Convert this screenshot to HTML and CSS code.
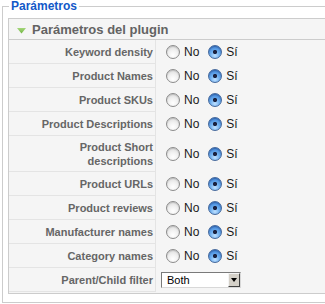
FILE: index.html
```html
<!DOCTYPE html>
<html lang="es">
<head>
<meta charset="utf-8">
<title>Parámetros</title>
<link rel="stylesheet" href="styles.css">
</head>
<body>
<fieldset class="params">
  <legend class="params-legend">Parámetros</legend>
  <div class="panel">
    <h3 class="panel-title">
      <svg class="arrow" width="9" height="6" viewBox="0 0 9 6" aria-hidden="true">
        <defs>
          <linearGradient id="ag" x1="0" y1="0" x2="0" y2="1">
            <stop offset="0" stop-color="#a6d77c"/>
            <stop offset="1" stop-color="#6fb43f"/>
          </linearGradient>
        </defs>
        <polygon points="0,0 9,0 4.5,5.5" fill="url(#ag)"/>
      </svg>
      <span>Parámetros del plugin</span>
    </h3>
    <div class="panel-content">
      <table class="paramlist">
        <tr>
          <td class="key">Keyword density</td>
          <td class="value"><div class="choices"><label class="opt"><input type="radio" class="radio" name="p1">No</label><label class="opt"><input type="radio" class="radio" name="p1" checked>Sí</label></div></td>
        </tr>
        <tr>
          <td class="key">Product Names</td>
          <td class="value"><div class="choices"><label class="opt"><input type="radio" class="radio" name="p2">No</label><label class="opt"><input type="radio" class="radio" name="p2" checked>Sí</label></div></td>
        </tr>
        <tr>
          <td class="key">Product SKUs</td>
          <td class="value"><div class="choices"><label class="opt"><input type="radio" class="radio" name="p3">No</label><label class="opt"><input type="radio" class="radio" name="p3" checked>Sí</label></div></td>
        </tr>
        <tr>
          <td class="key">Product Descriptions</td>
          <td class="value"><div class="choices"><label class="opt"><input type="radio" class="radio" name="p4">No</label><label class="opt"><input type="radio" class="radio" name="p4" checked>Sí</label></div></td>
        </tr>
        <tr>
          <td class="key">Product Short<br>descriptions</td>
          <td class="value"><div class="choices"><label class="opt"><input type="radio" class="radio" name="p5">No</label><label class="opt"><input type="radio" class="radio" name="p5" checked>Sí</label></div></td>
        </tr>
        <tr>
          <td class="key">Product URLs</td>
          <td class="value"><div class="choices"><label class="opt"><input type="radio" class="radio" name="p6">No</label><label class="opt"><input type="radio" class="radio" name="p6" checked>Sí</label></div></td>
        </tr>
        <tr>
          <td class="key">Product reviews</td>
          <td class="value"><div class="choices"><label class="opt"><input type="radio" class="radio" name="p7">No</label><label class="opt"><input type="radio" class="radio" name="p7" checked>Sí</label></div></td>
        </tr>
        <tr>
          <td class="key">Manufacturer names</td>
          <td class="value"><div class="choices"><label class="opt"><input type="radio" class="radio" name="p8">No</label><label class="opt"><input type="radio" class="radio" name="p8" checked>Sí</label></div></td>
        </tr>
        <tr>
          <td class="key">Category names</td>
          <td class="value"><div class="choices"><label class="opt"><input type="radio" class="radio" name="p9">No</label><label class="opt"><input type="radio" class="radio" name="p9" checked>Sí</label></div></td>
        </tr>
        <tr>
          <td class="key">Parent/Child filter</td>
          <td class="value value-select">
            <div class="select">
              <span class="select-text">Both</span>
              <span class="select-btn"><span class="select-tri"></span></span>
            </div>
          </td>
        </tr>
      </table>
    </div>
  </div>
</fieldset>
</body>
</html>
```
FILE: styles.css
```css
html, body {
  margin: 0;
  padding: 0;
  overflow: hidden;
  background: #fff;
}

body {
  font-family: "Liberation Sans", Arial, Helvetica, sans-serif;
  font-size: 11px;
  color: #333;
}

.params {
  margin: 0 0 0 2px;
  padding: 6px 0 8px 5px;
  border: 1px solid #cccccc;
  width: 360px;
  min-width: 0;
}

.params-legend {
  color: #1258c8;
  font-size: 12px;
  font-weight: bold;
  line-height: 12px;
  padding: 0 2px;
  margin-left: 1px;
}

.panel {
  border: 1px solid #cccccc;
  background: #f5f5f5;
}

.panel-title {
  margin: 0;
  height: 20px;
  display: flex;
  align-items: center;
  padding-left: 8px;
  gap: 6px;
  font-size: 13px;
  font-weight: bold;
  color: #636363;
  border-bottom: 1px solid #cccccc;
  background: #f5f5f5;
}

.arrow {
  display: block;
  margin-top: 3px;
}

.panel-content {
  padding-bottom: 1px;
}

.paramlist {
  border-collapse: separate;
  border-spacing: 0;
  table-layout: fixed;
  width: 100%;
}

.paramlist td {
  box-sizing: border-box;
  height: 24px;
  vertical-align: middle;
}

.key {
  width: 147px;
  text-align: right;
  font-weight: bold;
  font-size: 11px;
  line-height: 14px;
  color: #666;
  padding: 4px 2px 3px 4px;
  border-bottom: 1px solid #e4e4e4;
  border-right: 1px solid #e4e4e4;
}

.value {
  padding: 0 0 0 10px;
}

.choices {
  display: flex;
  align-items: center;
  gap: 9px;
}

.opt {
  display: inline-flex;
  align-items: center;
  gap: 4px;
  font-size: 12px;
  color: #1a1a1a;
}

.radio {
  -webkit-appearance: none;
  appearance: none;
  margin: 0;
  width: 14px;
  height: 14px;
  border-radius: 50%;
  box-sizing: border-box;
  border: 1px solid #8c8c8c;
  background: radial-gradient(circle at 50% 75%, #ffffff 0, #f2f2f2 40%, #d6d6d6 100%);
  box-shadow: inset 0 1px 1px rgba(0, 0, 0, 0.15);
}

.radio:checked {
  border-color: #44689c;
  background:
    radial-gradient(circle at 50% 50%, #1b2240 0, #1b2240 1.8px, transparent 2.4px),
    radial-gradient(circle at 50% 80%, #bfe0ff 0, #6fb0f0 40%, #2f74cf 100%);
  box-shadow: inset 0 1px 1px rgba(0, 0, 40, 0.25);
}

.value-select {
  padding-left: 5px;
}

.select {
  box-sizing: border-box;
  width: 80px;
  height: 16px;
  display: flex;
  align-items: stretch;
  background: #fff;
  border: 1px solid;
  border-color: #7a7a7a #d8d8d8 #d8d8d8 #7a7a7a;
}

.select-text {
  flex: 1;
  font-size: 11px;
  line-height: 14px;
  color: #000;
  padding-left: 5px;
}

.select-btn {
  width: 12px;
  background: #d4d0c8;
  box-sizing: border-box;
  border: 1px solid;
  border-color: #f4f4f4 #404040 #404040 #f4f4f4;
  display: flex;
  align-items: center;
  justify-content: center;
}

.select-tri {
  width: 0;
  height: 0;
  border-left: 3.5px solid transparent;
  border-right: 3.5px solid transparent;
  border-top: 4px solid #000;
}
```
